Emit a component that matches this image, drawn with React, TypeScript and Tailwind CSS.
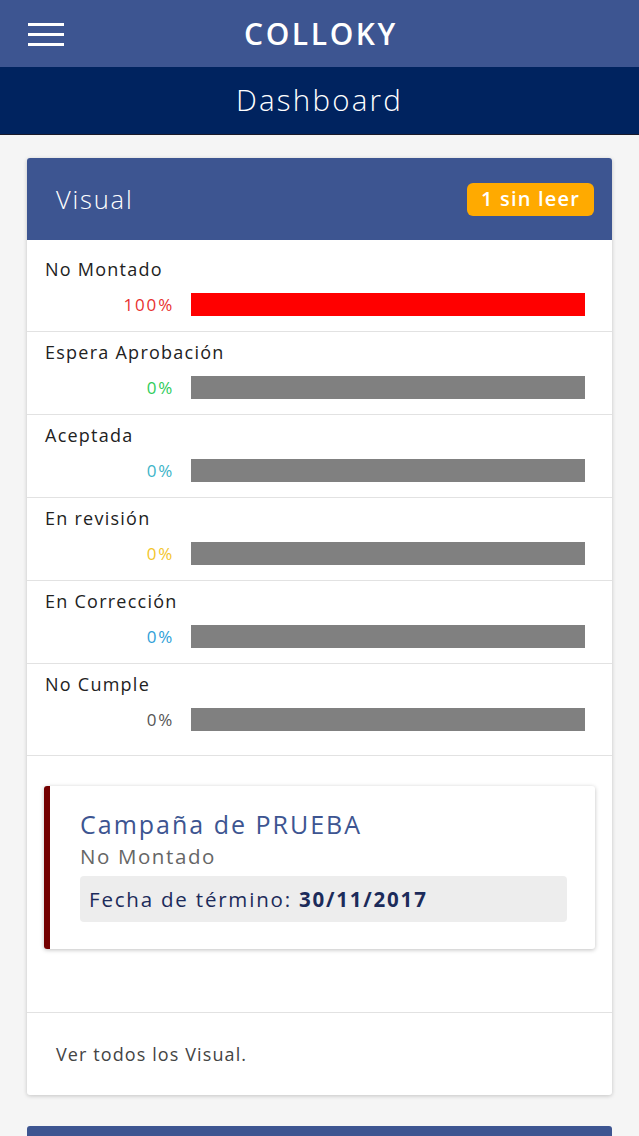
import React from "react";

const rows = [
  { label: "No Montado", pct: "100%", color: "text-[#e8312f]", fill: true },
  { label: "Espera Aprobación", pct: "0%", color: "text-[#2ecc5a]", fill: false },
  { label: "Aceptada", pct: "0%", color: "text-[#3cb4c8]", fill: false },
  { label: "En revisión", pct: "0%", color: "text-[#f3c52b]", fill: false },
  { label: "En Corrección", pct: "0%", color: "text-[#2f9fd8]", fill: false },
  { label: "No Cumple", pct: "0%", color: "text-[#555555]", fill: false },
];

export default function App() {
  return (
    <div className="bg-[#f5f5f5] font-['Open_Sans',sans-serif] overflow-hidden h-[1136px]">
      <header className="h-[67px] bg-[#3d5591] flex items-center relative">
        <div className="absolute left-[28px] top-[23px] flex flex-col gap-[7px]">
          <span className="block w-[36px] h-[3px] bg-white" />
          <span className="block w-[36px] h-[3px] bg-white" />
          <span className="block w-[36px] h-[3px] bg-white" />
        </div>
        <div className="flex-1 text-center text-white text-[30px] font-semibold tracking-[2.6px] pl-[3px]">COLLOKY</div>
      </header>
      <div className="h-[68px] bg-[#00235f] flex items-center justify-center text-white text-[29.5px] font-light tracking-[2.2px] border-b border-[#1a1a2a]">
        Dashboard
      </div>
      <main className="px-[27px] pt-[23px]">
        <section className="bg-white rounded-[3px] shadow-[0_1px_4px_rgba(0,0,0,0.2)]">
          <div className="h-[82px] bg-[#3d5591] rounded-t-[3px] flex items-center justify-between pl-[29px] pr-[18px]">
            <span className="text-white text-[25.5px] font-light tracking-[1.8px]">Visual</span>
            <span className="bg-[#ffaa00] text-white text-[20px] font-semibold rounded-[6px] h-[33px] w-[127px] justify-center flex items-center tracking-[1.2px]">1 sin leer</span>
          </div>
          <div className="pt-[9px] pb-[8px] border-b border-[#e2e2e2]">
            {rows.map((r, i) => (
              <div key={r.label} className={`h-[83px] pl-[18px] pr-[27px] pt-[8px] ${i < rows.length - 1 ? "border-b border-[#e2e2e2]" : ""}`}>
                <div className="text-[18px] text-[#222] leading-[24px] tracking-[1.25px]">{r.label}</div>
                <div className="flex items-center mt-[11px]">
                  <span className={`w-[146px] text-right pr-[17px] text-[17px] tracking-[1.8px] ${r.color}`}>{r.pct}</span>
                  <div className={`flex-1 h-[23px] ${r.fill ? "bg-[#ff0000]" : "bg-[#808080]"}`} />
                </div>
              </div>
            ))}
          </div>
          <div className="px-[17px] pt-[30px] pb-[63px] border-b border-[#e2e2e2]">
            <div className="flex bg-white shadow-[0_1px_4px_rgba(0,0,0,0.25)] rounded-[3px] overflow-hidden">
              <div className="w-[6px] bg-[#730000] shrink-0" />
              <div className="flex-1 pl-[30px] pr-[28px] pt-[22px] pb-[27px]">
                <div className="text-[#3d5591] text-[25px] leading-[33px] tracking-[2px]">Campaña de PRUEBA</div>
                <div className="text-[#666] text-[20.5px] leading-[30px] tracking-[1.6px]">No Montado</div>
                <div className="mt-[5px] bg-[#ededed] rounded-[4px] h-[46px] flex items-center px-[9px] text-[#1c2b5a] text-[20.5px] tracking-[1.8px]">
                  Fecha de término:&nbsp;<span className="font-bold">30/11/2017</span>
                </div>
              </div>
            </div>
          </div>
          <div className="h-[82px] flex items-center pl-[29px] text-[#444] text-[18px] tracking-[1.1px]">Ver todos los Visual.</div>
        </section>
        <div className="mt-[31px] h-[40px] bg-[#3d5591] rounded-t-[3px]" />
      </main>
    </div>
  );
}
